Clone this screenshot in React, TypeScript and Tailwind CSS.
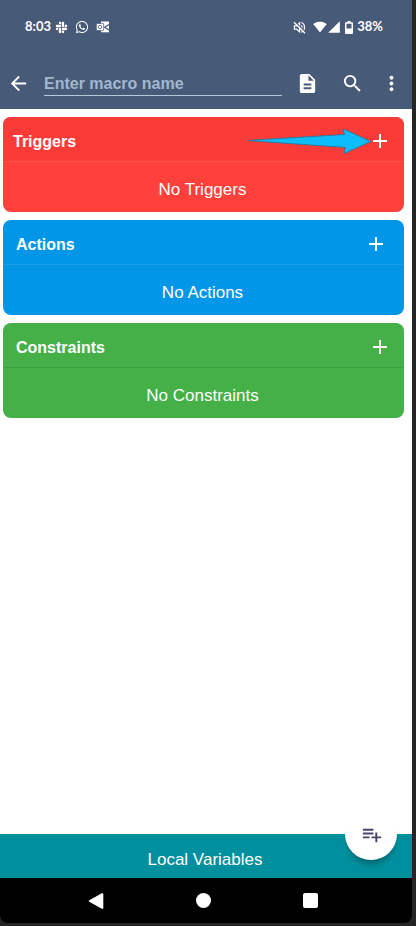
import { FC } from "react";
import clsx from "clsx";
import { FaSlack, FaWhatsapp } from "react-icons/fa";
import {
    MdAdd,
    MdArrowBack,
    MdDescription,
    MdMoreVert,
    MdPlaylistAdd,
    MdSearch,
    MdSignalCellular4Bar,
    MdSignalWifi4Bar,
} from "react-icons/md";

interface SectionProps {
    title: string;
    emptyText: string;
    cardStyle: string;
    headerStyle: string;
    dividerStyle: string;
    highlighted?: boolean;
}

const sections: SectionProps[] = [
    {
        title: "Triggers",
        emptyText: "No Triggers",
        cardStyle: "bg-[#ff403b]",
        headerStyle: "bg-[#fa3b37] pl-[10px] pr-3",
        dividerStyle: "border-[#ff4f48]",
        highlighted: true,
    },
    {
        title: "Actions",
        emptyText: "No Actions",
        cardStyle: "bg-[#0296e8]",
        headerStyle: "pl-[13px] pr-4",
        dividerStyle: "border-[#1a9eea]",
    },
    {
        title: "Constraints",
        emptyText: "No Constraints",
        cardStyle: "bg-[#45b048]",
        headerStyle: "pl-[13px] pr-3",
        dividerStyle: "border-[#3aa03e]",
    },
];

const IconOutlook: FC = () => (
    <svg width="14" height="12" viewBox="0 0 14 12">
        <path d="M5 .5h8v10.8H5z" fill="#fff" />
        <path d="M13.5 3.2 8.5 6.3l5 3" fill="none" stroke="#475a78" strokeWidth="1.2" />
        <rect x=".4" y="2.4" width="7.2" height="7.2" rx=".6" fill="#fff" stroke="#475a78" strokeWidth=".7" />
        <circle cx="4" cy="6" r="1.7" fill="none" stroke="#475a78" strokeWidth=".8" />
    </svg>
);

const IconMuted: FC = () => (
    <svg width="13" height="13" viewBox="0 0 13 13" fill="none" stroke="currentColor" strokeWidth="1.2">
        <path d="M1.4 4.8h2.2l3-2.8v8.8l-3-2.7H1.4z" />
        <path d="M8.2 4.4c1.2 1 1.2 3 0 4M8.3 1.5c4.3 1.3 4.3 8.4 0 9.8" />
        <path d="M2 .6 12.6 11.2" stroke="#475a78" strokeWidth="1.2" />
        <path d="M1 1.2 12 12.2" strokeWidth="1.3" />
    </svg>
);

const IconBattery: FC = () => (
    <svg width="8" height="13" viewBox="0 0 8 13" fill="currentColor">
        <path fillRule="evenodd" d="M2.5 0h3v1.3H7c.6 0 1 .4 1 1V12c0 .6-.4 1-1 1H1c-.6 0-1-.4-1-1V2.3c0-.6.4-1 1-1h1.5zM1.5 2.8v4.7h5V2.8z" />
    </svg>
);

const PointerArrow: FC = () => (
    <svg className="pointer-events-none absolute top-[11px] right-8" width="126" height="27" viewBox="0 0 126 27">
        <path d="M1 12.5 98.5 6.5 97 .8 125 13.5 98 25.5 99.5 19.5z" fill="#0cbcfb" stroke="#34779b" strokeWidth="1" strokeLinejoin="round" />
    </svg>
);

const StatusBar: FC = () => (
    <div className="flex h-[54px] items-center justify-between pr-[29px] pl-[25px] font-[Lato,sans-serif] text-[13px] font-bold">
        <div className="flex items-center">
            <span>8:03</span>
            <span className="ml-1 flex items-center gap-[7px]">
                <FaSlack size={13} />
                <FaWhatsapp size={14} />
                <IconOutlook />
            </span>
        </div>
        <div className="flex items-center">
            <IconMuted />
            <MdSignalWifi4Bar size={14} className="ml-[7px]" />
            <MdSignalCellular4Bar size={14} />
            <span className="mr-1 ml-1 flex">
                <IconBattery />
            </span>
            <span>38%</span>
        </div>
    </div>
);

const Toolbar: FC = () => (
    <div className="flex h-[55px] items-center pt-1 pr-[9px] pl-[7px]">
        <button aria-label="Back">
            <MdArrowBack size={23} />
        </button>
        <input
            type="text"
            aria-label="Macro name"
            placeholder="Enter macro name"
            className="ml-[14px] h-6 min-w-0 flex-1 border-b border-[#b5c8dc] pt-0.5 text-base font-bold outline-none placeholder:text-[#a3b7d1]"
        />
        <div className="ml-[14px] flex items-center">
            <button aria-label="Description">
                <MdDescription size={23} />
            </button>
            <button aria-label="Search" className="ml-[22px]">
                <MdSearch size={23} />
            </button>
            <button aria-label="More options" className="ml-4">
                <MdMoreVert size={23} />
            </button>
        </div>
    </div>
);

const Section: FC<SectionProps> = ({ title, emptyText, cardStyle, headerStyle, dividerStyle, highlighted }) => {
    return (
        <section className={clsx("overflow-hidden rounded-lg", cardStyle)}>
            <div className={clsx("relative flex h-11 items-center justify-between pt-1", headerStyle)}>
                <h2 className="pt-0.5 text-base font-bold">{title}</h2>
                {highlighted && <PointerArrow />}
                <button aria-label={`Add ${title}`}>
                    <MdAdd size={24} />
                </button>
            </div>
            <p className={clsx("flex h-[51px] items-center justify-center border-t pt-1.5 pr-0.5 text-[17px]", dividerStyle)}>{emptyText}</p>
        </section>
    );
};

export default function App() {
    return (
        <div className="flex min-h-screen flex-col bg-[#252525] pr-1 pb-[3px] font-['Liberation_Sans',Arial,sans-serif] text-white">
            <div className="flex flex-1 flex-col overflow-hidden rounded-b-lg bg-black">
                <header className="bg-[#475a78]">
                    <StatusBar />
                    <Toolbar />
                </header>
                <main className="flex flex-1 flex-col gap-2 bg-white pt-2 pr-2 pl-[3px]">
                    {sections.map((section) => (
                        <Section key={section.title} {...section} />
                    ))}
                </main>
                <footer className="relative">
                    <button className="h-11 w-full bg-[#00909d] pt-2 pr-0.5 text-[17px]">Local Variables</button>
                    <button
                        aria-label="Add local variable"
                        className="absolute -top-[26px] right-[15px] flex size-[52px] items-center justify-center rounded-full bg-white text-[#46466a] shadow-[0_7px_6px_-3px_rgba(0,0,0,0.3)]"
                    >
                        <MdPlaylistAdd size={23} />
                    </button>
                </footer>
                <nav className="flex h-[45px] items-center justify-between pr-[94px] pl-[88px]">
                    <button aria-label="Back">
                        <svg width="16" height="16" viewBox="0 0 16 16" fill="#fff">
                            <path d="M13.8.3c.8-.4 1.500 0 1.500.8v13.800c0 .8-.7 1.200-1.500.8L1.300 8.800c-.7-.4-.7-1.200 0-1.600z" />
                        </svg>
                    </button>
                    <button aria-label="Home" className="size-[15px] rounded-full bg-white" />
                    <button aria-label="Recent apps" className="size-[15px] rounded-xs bg-white" />
                </nav>
            </div>
        </div>
    );
}
